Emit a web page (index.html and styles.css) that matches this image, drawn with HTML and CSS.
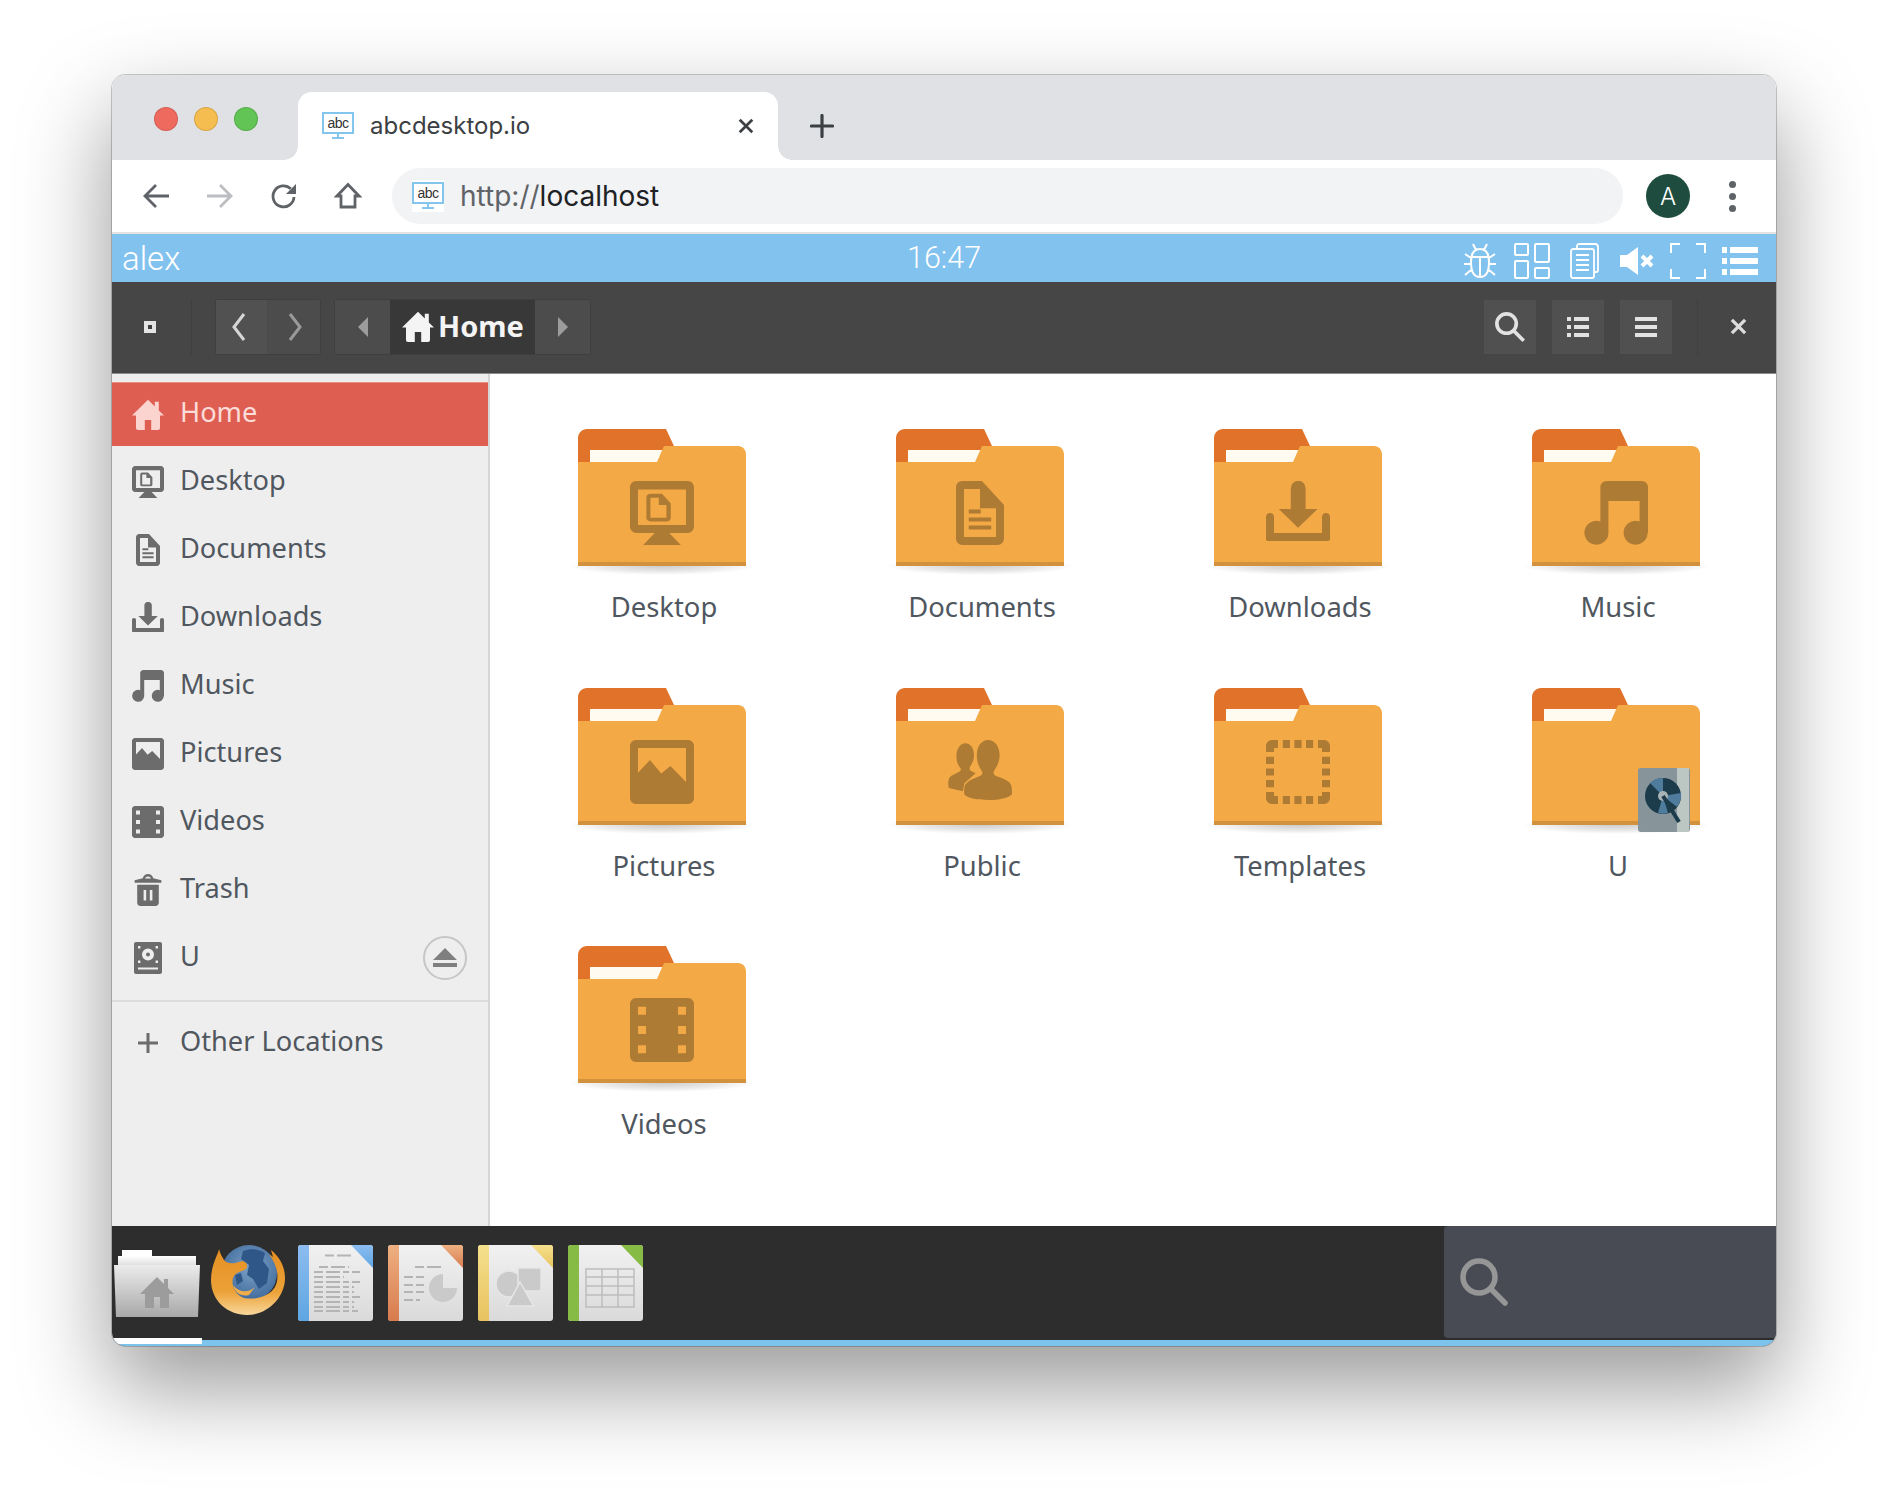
FILE: index.html
```html
<!DOCTYPE html>
<html lang="en">
<head>
<meta charset="utf-8">
<title>abcdesktop.io</title>
<link rel="stylesheet" href="styles.css">
</head>
<body>
<svg class="defs" width="0" height="0" aria-hidden="true">
  <defs>
    <radialGradient id="folderShadow" cx="50%" cy="50%" r="50%">
      <stop offset="0" stop-color="#000" stop-opacity=".2"/>
      <stop offset=".6" stop-color="#000" stop-opacity=".09"/>
      <stop offset="1" stop-color="#000" stop-opacity="0"/>
    </radialGradient>
    <linearGradient id="dockFolder" x1="0" y1="0" x2="0" y2="1"><stop offset="0" stop-color="#ececec"/><stop offset="1" stop-color="#a8a8a8"/></linearGradient>
    <linearGradient id="dockPaper" x1="0" y1="0" x2="0" y2="1"><stop offset="0" stop-color="#fff"/><stop offset="1" stop-color="#d6d6d6"/></linearGradient>
    <linearGradient id="loPage" x1="0" y1="0" x2="0" y2="1"><stop offset="0" stop-color="#f1f1f1"/><stop offset="1" stop-color="#dadada"/></linearGradient>
    <linearGradient id="foxBody" x1="0" y1="0" x2="0" y2="1"><stop offset="0" stop-color="#e58f22"/><stop offset=".65" stop-color="#eca238"/><stop offset="1" stop-color="#f8d79b"/></linearGradient>
    <radialGradient id="globe" cx="55%" cy="40%" r="60%"><stop offset="0" stop-color="#7fa3c8"/><stop offset="1" stop-color="#3f6a9b"/></radialGradient>
    <linearGradient id="loBlue" x1="0" y1="0" x2="0" y2="1"><stop offset="0" stop-color="#8cbcf0"/><stop offset="1" stop-color="#5ea6e2"/></linearGradient>
    <linearGradient id="loOrange" x1="0" y1="0" x2="0" y2="1"><stop offset="0" stop-color="#eeb081"/><stop offset="1" stop-color="#d87b4e"/></linearGradient>
    <linearGradient id="loYellow" x1="0" y1="0" x2="0" y2="1"><stop offset="0" stop-color="#f5e08c"/><stop offset="1" stop-color="#e8c25f"/></linearGradient>

    <symbol id="g-home" viewBox="0 0 16 16"><path d="M8 .4 0 8.3h2v6.2c0 .6.4 1 1 1h3.4v-5h3.2v5H13c.6 0 1-.4 1-1V8.3h2l-2.6-2.6V1.4h-2v2.3z"/></symbol>
    <symbol id="g-desktop" viewBox="0 0 16 16"><path fill-rule="evenodd" d="M1.6 0h12.8C15.3 0 16 .7 16 1.6v9.8c0 .9-.7 1.6-1.6 1.6H1.6C.7 13 0 12.3 0 11.4V1.6C0 .7.7 0 1.6 0zM2 2.1V11h12V2.1zM5.1 3.2h2.9l2.2 2.4v3.6c0 .5-.4.9-.9.9H5.1c-.6 0-1-.4-1-.9V4.200c0-.6.4-1 1-1zm0 1v5h4V6H7.200V4.200z"/><path d="M6.200 13h3.600l2.900 3H3.300z"/></symbol>
    <symbol id="g-doc" viewBox="0 0 16 16"><path fill-rule="evenodd" d="M3.600 0h4.900L14 6v8.400c0 .9-.7 1.600-1.600 1.600H3.600C2.700 16 2 15.300 2 14.400V1.600C2 .7 2.700 0 3.600 0zM4 2v12h8V6.800H8V2z"/><path d="M5.200 7.100h3v1h-3zM5.200 9.100h5.600v1H5.200zM5.200 11.100h5.600v1H5.200z"/></symbol>
    <symbol id="g-download" viewBox="0 0 16 16"><path d="M6.200 1.800a1.800 1.800 0 0 1 3.700 0V7h3L8 11.700 3.200 7h3z"/><path d="M1 8c.6 0 1 .4 1 1v4h12V9c0-.6.4-1 1-1s1 .4 1 1v5.500c0 .3-.2.500-.5.500H.5c-.3 0-.5-.2-.5-.5V9c0-.6.4-1 1-1z"/></symbol>
    <symbol id="g-music" viewBox="0 0 16 16"><path d="M5.700 0h8.800c.8 0 1.500.7 1.500 1.500V13h-.1a3 3 0 1 1-2-2.900V5H6.100v8a3 3 0 1 1-2-2.900V1.500C4.100.7 4.800 0 5.700 0z"/></symbol>
    <symbol id="g-pictures" viewBox="0 0 16 16"><path fill-rule="evenodd" d="M1.500 0h13c.8 0 1.500.7 1.500 1.500v13c0 .8-.7 1.500-1.500 1.500h-13C.7 16 0 15.300 0 14.500v-13C0 .7.7 0 1.500 0zM2 2v6.200l3-3.200 2.800 3.400 2.300-1.900L14 10.500V2z"/></symbol>
    <symbol id="g-videos" viewBox="0 0 16 16"><path fill-rule="evenodd" d="M1.500 0h13c.8 0 1.500.7 1.500 1.500v13c0 .8-.7 1.500-1.500 1.500h-13C.7 16 0 15.300 0 14.500v-13C0 .7.7 0 1.500 0zM2 2.200v2h2v-2zM12 2.200v2h2v-2zM2 7v2h2V7zM12 7v2h2V7zM2 11.800v2h2v-2zM12 11.800v2h2v-2z"/></symbol>
    <symbol id="g-trash" viewBox="0 0 16 16"><path d="M5.400 2.100C5.600 1 6.700 0 8 0s2.400 1 2.600 2.100l4.100 1v1.300H1.300V3.100zM6.500 2.200h3C9.300 1.600 8.700 1.200 8 1.200s-1.300.4-1.500 1z"/><path fill-rule="evenodd" d="M2.600 5.400h10.800v9c0 .9-.7 1.600-1.600 1.600H4.200c-.9 0-1.600-.7-1.600-1.600zM5.800 8v5.200h1.300V8zm3.100 0v5.200h1.300V8z"/></symbol>
    <symbol id="g-drive" viewBox="0 0 16 16"><path fill-rule="evenodd" d="M2 0h12c.6 0 1 .4 1 1v14c0 .6-.4 1-1 1H2c-.6 0-1-.4-1-1V1c0-.6.4-1 1-1zm6 3.200a3 3 0 1 0 0 6 3 3 0 0 0 0-6zm0 2a1 1 0 1 1 0 2 1 1 0 0 1 0-2zM3 2v1.200h1.200V2zm8.800 0v1.200H13V2zM3 9.300v1.200h1.200V9.300zm8.800 0v1.200H13V9.300zM3 12.800v1h10v-1z"/></symbol>
    <symbol id="g-public" viewBox="0 0 16 16"><path d="M10 0c1.700 0 2.900 1.600 2.900 3.800 0 1.600-.7 3-1.400 3.900-.2.500-.1 1 .3 1.200 1.300.6 3.500 1.100 4 2.400.2.800.200 1.500.2 2.200-.8 1-3.200 1.500-5.900 1.500-2.800 0-5-.4-6-1.300-.1-.8-.1-1.600.1-2.300.6-1.300 2.700-1.800 4-2.500.4-.2.500-.7.300-1.100-.7-.9-1.300-2.300-1.300-3.900C7.200 1.600 8.400 0 10 0z"/><path d="M4.300.8c1.300 0 2.200 1.200 2.200 3 0 1.200-.5 2.200-1 2.900-.2.400-.1.800.2 1l1.200.6-2.800 2.500-.4 2-3.500-.8c-.2-.8-.2-1.500 0-2.200.4-1 1.700-1.300 2.700-1.900.3-.2.400-.5.200-.9-.6-.7-1-1.700-1-2.900 0-1.800.900-3.300 2.200-3.300z"/></symbol>
    <symbol id="g-templates" viewBox="0 0 16 16"><path d="M1.500 0H3v2H2v1H0V1.500C0 .7.700 0 1.500 0zM13 0h1.500c.8 0 1.500.7 1.500 1.500V3h-2V2h-1zM0 13h2v1h1v2H1.500C.7 16 0 15.300 0 14.500zM14 13h2v1.500c0 .8-.7 1.500-1.500 1.500H13v-2h1zM4.200 0H6v2H4.200zM7.100 0h1.800v2H7.100zM10 0h1.800v2H10zM4.200 14H6v2H4.200zM7.100 14h1.800v2H7.100zM10 14h1.800v2H10zM0 4.200h2V6H0zM0 7.100h2v1.800H0zM0 10h2v1.800H0zM14 4.200h2V6h-2zM14 7.100h2v1.800h-2zM14 10h2v1.800h-2z"/></symbol>

    <symbol id="folder" viewBox="0 0 168 146" overflow="visible">
      <ellipse cx="84" cy="137" rx="94" ry="9" fill="url(#folderShadow)"/>
      <path fill="#e0722a" d="M0 36V9C0 4 4 0 9 0h79l8 17v19z"/>
      <rect x="12" y="21" width="78" height="15" fill="#fffbf0"/>
      <path fill="#f4a947" d="M0 33h79l7-16h74c4.400 0 8 3.600 8 8v108H0z"/>
      <rect y="133" width="168" height="4" fill="#d2913d"/>
    </symbol>

    <symbol id="abc" viewBox="0 0 32 28">
      <rect x="1" y="1" width="30" height="20" fill="#fff" stroke="#84c5ee" stroke-width="2"/>
      <path d="M15 21h2v4h-2zM10 25h12v2H10z" fill="#84c5ee"/>
      <text x="16" y="16" class="abc-text" text-anchor="middle">abc</text>
    </symbol>
  </defs>
</svg>

<div class="window">
  <header class="tabstrip">
    <div class="lights">
      <span class="light light-red"></span>
      <span class="light light-yellow"></span>
      <span class="light light-green"></span>
    </div>
    <div class="tab">
      <svg class="tab-fav"><use href="#abc"/></svg>
      <span class="tab-title">abcdesktop.io</span>
      <svg class="tab-close" viewBox="0 0 14 14"><path d="M1.500 1.500l11 11M12.500 1.500l-11 11"/></svg>
    </div>
    <svg class="tab-new" viewBox="0 0 24 24"><path d="M12 1.500v21M1.500 12h21"/></svg>
  </header>

  <div class="toolbar">
    <svg class="tb-btn" viewBox="0 0 28 28"><path d="M27 14H3M14 3 3 14l11 11"/></svg>
    <svg class="tb-btn tb-off" viewBox="0 0 28 28"><path d="M1 14h24M14 3l11 11-11 11"/></svg>
    <svg class="tb-btn" viewBox="0 0 28 28"><path d="M24 15a10.500 10.500 0 1 1-3.200-8.200"/><path class="tb-fill" d="M26 2v10H16z"/></svg>
    <svg class="tb-btn" viewBox="0 0 28 28"><path d="M14 2.500 3 14h4v11h14V14h4z"/></svg>
    <div class="address">
      <span class="addr-fav"><svg class="addr-fav-icon"><use href="#abc"/></svg></span>
      <span class="url"><span class="url-scheme">http://</span>localhost</span>
    </div>
    <span class="avatar">A</span>
    <span class="kebab"><i></i><i></i><i></i></span>
  </div>

  <div class="topbar">
    <span class="user">alex</span>
    <span class="clock">16:47</span>
    <div class="tray">
      <svg class="tray-i tray-bug" viewBox="0 0 32 36"><path d="M16 6c-6 0-9 5-9 13 0 9 3 15 9 15s9-6 9-15c0-8-3-13-9-13zM7 14h18M16 14v20M9 1l3 6M23 1l-3 6M1 11l6 4M31 11l-6 4M0 21h7M32 21h-7M1 32l6-5M31 32l-6-5"/></svg>
      <svg class="tray-i tray-grid" viewBox="0 0 36 36"><rect x="1" y="1" width="13" height="11" rx="1"/><rect x="21" y="1" width="14" height="18" rx="1"/><rect x="1" y="18" width="13" height="17" rx="1"/><rect x="21" y="25" width="14" height="10" rx="1"/></svg>
      <svg class="tray-i tray-doc" viewBox="0 0 29 36"><path d="M7 5V3c0-1 1-2 2-2h16c1.500 0 3 1 3 3v23c0 1-1 2-2 2h-2"/><path d="M3 6h19c1 0 2 1 2 2v25c0 1-1 2-2 2H3c-1 0-2-1-2-2V8c0-1 1-2 2-2zM6 12h13M6 17h13M6 22h13M6 27h13"/></svg>
      <svg class="tray-i tray-mute" viewBox="0 0 34 28"><path class="tray-fill" d="M0 8h7l11-8v28L7 20H0z"/><path class="tray-x" d="M22 9l10 10M32 9 22 19"/></svg>
      <svg class="tray-i tray-full" viewBox="0 0 36 36"><path d="M10 1H1v9M26 1h9v9M10 35H1v-9M26 35h9v-9"/></svg>
      <svg class="tray-i tray-list" viewBox="0 0 36 28"><path class="tray-fill" d="M0 0h5v6H0zM8 0h28v6H8zM0 11h5v6H0zM8 11h28v6H8zM0 22h5v6H0zM8 22h28v6H8z"/></svg>
    </div>
  </div>

  <div class="fm-header">
    <span class="fm-mini"></span>
    <span class="fm-sep"></span>
    <div class="fm-group">
      <span class="fm-seg fm-seg-back"><svg class="fm-chev" viewBox="0 0 14 28"><path d="M12 1 2 14l10 13"/></svg></span>
      <span class="fm-seg fm-seg-fwd"><svg class="fm-chev fm-chev-dim" viewBox="0 0 14 28"><path d="m2 1 10 13L2 27"/></svg></span>
    </div>
    <div class="fm-group fm-path">
      <span class="fm-seg fm-seg-arrow"><svg class="fm-tri" viewBox="0 0 10 20"><path d="M10 0v20L0 10z"/></svg></span>
      <span class="fm-seg fm-seg-crumb"><svg class="fm-house"><use href="#g-home"/></svg><b>Home</b></span>
      <span class="fm-seg fm-seg-arrow"><svg class="fm-tri" viewBox="0 0 10 20"><path d="M0 0v20l10-10z"/></svg></span>
    </div>
    <div class="fm-actions">
      <span class="fm-btn"><svg class="fm-ic" viewBox="0 0 28 28"><circle cx="11" cy="11" r="8.500"/><path d="m17 17 9 9"/></svg></span>
      <span class="fm-btn"><svg class="fm-ic fm-ic-solid" viewBox="0 0 22 22"><path d="M0 1h4v4H0zM7 1h15v4H7zM0 9h4v4H0zM7 9h15v4H7zM0 17h4v4H0zM7 17h15v4H7z"/></svg></span>
      <span class="fm-btn"><svg class="fm-ic fm-ic-solid" viewBox="0 0 22 22"><path d="M0 1h22v4H0zM0 9h22v4H0zM0 17h22v4H0z"/></svg></span>
      <span class="fm-sep fm-sep-right"></span>
      <svg class="fm-close" viewBox="0 0 18 18"><path d="m2 2 14 14M16 2 2 16"/></svg>
    </div>
  </div>

  <div class="fm-body">
    <nav class="sidebar">
      <a class="side-row side-active"><svg class="side-ic"><use href="#g-home"/></svg><span>Home</span></a>
      <a class="side-row"><svg class="side-ic"><use href="#g-desktop"/></svg><span>Desktop</span></a>
      <a class="side-row"><svg class="side-ic"><use href="#g-doc"/></svg><span>Documents</span></a>
      <a class="side-row"><svg class="side-ic"><use href="#g-download"/></svg><span>Downloads</span></a>
      <a class="side-row"><svg class="side-ic"><use href="#g-music"/></svg><span>Music</span></a>
      <a class="side-row"><svg class="side-ic"><use href="#g-pictures"/></svg><span>Pictures</span></a>
      <a class="side-row"><svg class="side-ic"><use href="#g-videos"/></svg><span>Videos</span></a>
      <a class="side-row"><svg class="side-ic"><use href="#g-trash"/></svg><span>Trash</span></a>
      <a class="side-row side-u"><svg class="side-ic"><use href="#g-drive"/></svg><span>U</span>
        <span class="eject"><svg class="eject-ic" viewBox="0 0 24 20"><path d="M12 0 24 12H0zM0 15h24v4H0z"/></svg></span>
      </a>
      <div class="side-div"></div>
      <a class="side-row"><svg class="side-ic side-plus" viewBox="0 0 20 20"><path d="M8.500 0h3v8.500H20v3h-8.500V20h-3v-8.500H0v-3h8.500z"/></svg><span>Other Locations</span></a>
    </nav>
    <main class="grid">
      <figure class="item"><div class="folder"><svg class="folder-svg"><use href="#folder"/></svg><svg class="folder-g"><use href="#g-desktop"/></svg></div><figcaption>Desktop</figcaption></figure>
      <figure class="item"><div class="folder"><svg class="folder-svg"><use href="#folder"/></svg><svg class="folder-g"><use href="#g-doc"/></svg></div><figcaption>Documents</figcaption></figure>
      <figure class="item"><div class="folder"><svg class="folder-svg"><use href="#folder"/></svg><svg class="folder-g"><use href="#g-download"/></svg></div><figcaption>Downloads</figcaption></figure>
      <figure class="item"><div class="folder"><svg class="folder-svg"><use href="#folder"/></svg><svg class="folder-g"><use href="#g-music"/></svg></div><figcaption>Music</figcaption></figure>
      <figure class="item"><div class="folder"><svg class="folder-svg"><use href="#folder"/></svg><svg class="folder-g"><use href="#g-pictures"/></svg></div><figcaption>Pictures</figcaption></figure>
      <figure class="item"><div class="folder"><svg class="folder-svg"><use href="#folder"/></svg><svg class="folder-g"><use href="#g-public"/></svg></div><figcaption>Public</figcaption></figure>
      <figure class="item"><div class="folder"><svg class="folder-svg"><use href="#folder"/></svg><svg class="folder-g"><use href="#g-templates"/></svg></div><figcaption>Templates</figcaption></figure>
      <figure class="item"><div class="folder"><svg class="folder-svg"><use href="#folder"/></svg>
        <svg class="folder-badge" viewBox="0 0 52 64">
          <rect width="52" height="64" rx="3" fill="#87959b"/>
          <rect x="39" width="12" height="64" fill="#bcc6c3"/>
          <circle cx="25" cy="28" r="18" fill="#1c3b4b"/>
          <path d="M25 28 12 15a18 18 0 0 1 13-5zM25 28l18-3a18 18 0 0 1-4 14zM25 28 20 45a18 18 0 0 0 10 0z" fill="#4f7c9c"/>
          <circle cx="25" cy="28" r="5" fill="#a9b4b6"/>
          <path d="m25 28 16 26" stroke="#1c3b4b" stroke-width="4"/>
        </svg>
      </div><figcaption>U</figcaption></figure>
      <figure class="item"><div class="folder"><svg class="folder-svg"><use href="#folder"/></svg><svg class="folder-g"><use href="#g-videos"/></svg></div><figcaption>Videos</figcaption></figure>
    </main>
  </div>

  <footer class="dock">
    <div class="dock-apps">
      <svg class="app app-folder" viewBox="0 0 86 67">
        <path d="M8 0h30v6H8z" fill="#fff"/>
        <path d="M4 6h78v12H4z" fill="url(#dockPaper)"/>
        <path d="M0 15h86l-2 52H2z" fill="url(#dockFolder)"/>
        <path d="M43 27 26 44h5v14h9V47h6v11h9V44h5l-6-6v-9h-4v5z" fill="#9c9c9c"/>
      </svg>
      <svg class="app app-fox" viewBox="0 0 74 70">
        <circle cx="38" cy="28" r="28" fill="url(#globe)"/>
        <path d="M32 6c8-3 16-2 22 2l-2 8 6 8-2 14-8 6-6-10-6-4 2-10-8-6zM24 30l6-2 2 8-6 4z" fill="#2f5788"/>
        <path fill="url(#foxBody)" d="M8 4C7 10 0 20 0 35c0 21 17 35 36 35 21 0 38-18 38-37 0-11-5-21-14-28l2 7-4-3c8 11 11 23 6 33-6 10-20 13-31 11-9-3-13-13-11-20 4-9 12-5 14-11 1-4-4-7-8-5-6 2-12 2-15-2-2-3-4-7-5-11z"/>
        <path fill="#f0ad4a" d="M22 40c6 8 16 8 22 2l-6 8c-8 2-14-2-16-10z"/>
      </svg>
      <svg class="app app-lo" viewBox="0 0 75 76">
        <rect width="75" height="76" rx="3" fill="url(#loPage)"/>
        <path d="M3 0h8v76H3a3 3 0 0 1-3-3V3a3 3 0 0 1 3-3z" fill="url(#loBlue)"/>
        <path d="M53 0h19a3 3 0 0 1 3 3v20z" fill="url(#loBlue)"/>
        <path class="lo-lines" d="M27 10.500h26M21 22h30M16 27h46M16 32h30M16 37h46M16 42h40M16 47h40M16 52h46M16 57h40M16 62h40M16 66h44"/>
      </svg>
      <svg class="app app-lo" viewBox="0 0 75 76">
        <rect width="75" height="76" rx="3" fill="url(#loPage)"/>
        <path d="M3 0h8v76H3a3 3 0 0 1-3-3V3a3 3 0 0 1 3-3z" fill="url(#loOrange)"/>
        <path d="M53 0h19a3 3 0 0 1 3 3v20z" fill="url(#loOrange)"/>
        <path class="lo-lines" d="M27 22h26M16 32h20M16 40h20M16 47h20M16 55h16"/>
        <path class="lo-shape" d="M55 43V29a14 14 0 1 0 14 14z"/>
      </svg>
      <svg class="app app-lo" viewBox="0 0 75 76">
        <rect width="75" height="76" rx="3" fill="url(#loPage)"/>
        <path d="M3 0h8v76H3a3 3 0 0 1-3-3V3a3 3 0 0 1 3-3z" fill="url(#loYellow)"/>
        <path d="M53 0h19a3 3 0 0 1 3 3v20z" fill="url(#loYellow)"/>
        <circle class="lo-shape lo-edge" cx="31" cy="39" r="13"/>
        <rect class="lo-shape lo-edge" x="40" y="23" width="23" height="23"/>
        <path class="lo-shape lo-edge" d="M42 37 55.500 61H29z"/>
      </svg>
      <svg class="app app-lo" viewBox="0 0 75 76">
        <rect width="75" height="76" rx="3" fill="url(#loPage)"/>
        <path d="M3 0h8v76H3a3 3 0 0 1-3-3V3a3 3 0 0 1 3-3z" fill="#86bb46"/>
        <path d="M53 0h19a3 3 0 0 1 3 3v20z" fill="#86bb46"/>
        <path class="lo-table" d="M18 24h48v38H18zM34 24v38M50 24v38M18 32h48M18 41h48M18 50h48"/>
      </svg>
    </div>
    <div class="dock-search">
      <svg class="dock-search-ic" viewBox="0 0 48 48"><circle cx="19" cy="19" r="16"/><path d="m31 31 14 14"/></svg>
    </div>
    <span class="dock-active"></span>
  </footer>
</div>
</body>
</html>
```

FILE: styles.css
```css
* { box-sizing: border-box; }
html, body { margin: 0; padding: 0; background: #fff; }
body { width: 1888px; height: 1494px; overflow: hidden; padding: 75px 112px 0; font-family: "Noto Sans", "Open Sans", sans-serif; }
.defs { position: absolute; }
.abc-text { font-family: "Liberation Sans", sans-serif; font-size: 14px; letter-spacing: -.6px; fill: #333; }

.window { position: relative; width: 1664px; height: 1271px; border-radius: 14px; overflow: hidden; display: flex; flex-direction: column; background: #fff; }
body::before { content: ""; position: absolute; left: 112px; top: 75px; width: 1664px; height: 1271px; border-radius: 14px; box-shadow: 0 0 0 1px rgba(0,0,0,.2), 0 40px 90px 2px rgba(0,0,0,.4); }

/* tab strip */
.tabstrip { height: 85px; flex: none; background: #dfe1e5; display: flex; align-items: flex-end; padding-left: 42px; position: relative; }
.lights { display: flex; gap: 16px; align-self: flex-start; margin-top: 32px; margin-right: 40px; }
.light { width: 24px; height: 24px; border-radius: 50%; border: 1px solid rgba(0,0,0,.12); }
.light-red { background: #ee6a5f; }
.light-yellow { background: #f5bd4f; }
.light-green { background: #61c454; }
.tab { position: relative; width: 480px; height: 68px; background: #fff; border-radius: 14px 14px 0 0; display: flex; align-items: center; padding-left: 24px; margin-left: 0; }
.tab::before, .tab::after { content: ""; position: absolute; bottom: 0; width: 14px; height: 14px; }
.tab::before { left: -14px; background: radial-gradient(circle at 0 0, transparent 13.500px, #fff 14px); }
.tab::after { right: -14px; background: radial-gradient(circle at 100% 0, transparent 13.500px, #fff 14px); }
.tab-fav { width: 32px; height: 28px; flex: none; margin-right: 16px; margin-top: -1px; }
.tab-title { font-family: Inter, "Liberation Sans", sans-serif; font-size: 24px; color: #3c4043; margin-top: -2px; }
.tab-close { position: absolute; left: 440px; top: 26px; width: 16px; height: 16px; fill: none; stroke: #3c4043; stroke-width: 2.400; }
.tab-new { width: 24px; height: 24px; fill: none; stroke: #3c4043; stroke-width: 3.200; stroke-linecap: round; margin-left: 32px; margin-bottom: 22px; }

/* browser toolbar */
.toolbar { height: 72px; flex: none; background: #fff; display: flex; align-items: center; padding-left: 30px; border-bottom: 0; }
.tb-btn { width: 28px; height: 28px; flex: none; margin-right: 36px; fill: none; stroke: #5f6368; stroke-width: 2.800; }
.tb-off { stroke: #bbbdc0; }
.tb-fill { fill: #5f6368; stroke: none; }
.address { width: 1231px; height: 56px; margin-left: -6px; background: #f1f3f4; border-radius: 28px; display: flex; align-items: center; padding-left: 20px; }
.addr-fav { width: 32px; height: 32px; background: #fff; display: flex; align-items: center; justify-content: center; flex: none; }
.addr-fav-icon { width: 32px; height: 28px; }
.url { font-family: Inter, "Liberation Sans", sans-serif; font-size: 28px; margin-left: 16px; color: #202124; }
.url-scheme { color: #5f6368; }
.avatar { width: 44px; height: 44px; border-radius: 50%; background: #1e4d3f; color: #fff; margin-left: 23px; display: flex; align-items: center; justify-content: center; font-family: Inter, sans-serif; font-size: 24px; font-weight: 300; flex: none; }
.kebab { display: flex; flex-direction: column; gap: 5px; margin-left: 39px; width: 7px; }
.kebab i { width: 7px; height: 7px; border-radius: 50%; background: #5f6368; display: block; }

/* blue bar */
.topbar { height: 50px; flex: none; background: #82c2ee; border-top: 2px solid #e3e3e3; display: flex; align-items: center; color: #fff; position: relative; padding-left: 10px; }
.user { font-family: Roboto, sans-serif; font-weight: 300; font-size: 33px; line-height: 44px; margin-top: 1px; }
.clock { position: absolute; left: 795px; top: 4px; font-family: Roboto, sans-serif; font-weight: 300; font-size: 30.500px; line-height: 40px; }
.tray { margin-left: auto; display: flex; align-items: center; height: 100%; padding-right: 18px; padding-top: 6px; }
.tray-i { fill: none; stroke: #fff; stroke-width: 2; flex: none; }
.tray-bug { width: 32px; height: 36px; margin-right: 18px; }
.tray-grid { width: 36px; height: 36px; margin-right: 20px; }
.tray-doc { width: 29px; height: 36px; margin-right: 21px; stroke-width: 1.800; }
.tray-mute { width: 34px; height: 28px; margin-right: 16px; }
.tray-full { width: 36px; height: 36px; margin-right: 16px; }
.tray-list { width: 36px; height: 28px; }
.tray-fill { fill: #fff; stroke: none; }
.tray-x { stroke-width: 4; }

/* file manager header */
.fm-header { height: 92px; flex: none; background: #464646; border-bottom: 1px solid #8b8b8b; display: flex; align-items: center; padding: 0 0 2px 32px; }
.fm-mini { width: 12px; height: 12px; background: #3f3f3f; border: 4px solid #e4e4e4; flex: none; margin-right: 35px; }
.fm-sep { width: 1px; height: 56px; background: #404040; flex: none; margin-right: 24px; }
.fm-group { display: flex; height: 54px; box-shadow: 0 0 0 1px #3f3f3f; border-radius: 2px; margin-right: 15px; }
.fm-seg { display: flex; align-items: center; justify-content: center; background: #4c4c4c; }
.fm-seg-back { width: 51px; background: #515151; padding-right: 6px; }
.fm-seg-fwd { width: 53px; padding-left: 3px; }
.fm-seg-arrow { width: 55px; }
.fm-seg-crumb { width: 145px; background: #383838; gap: 4px; color: #f4f4f4; font-size: 29px; justify-content: flex-start; padding-left: 12px; }
.fm-seg-crumb b { font-weight: 700; line-height: 1; margin-top: -2px; }
.fm-chev { width: 14px; height: 28px; fill: none; stroke: #d6d6d6; stroke-width: 3; }
.fm-chev-dim { stroke: #9a9a9a; }
.fm-tri { width: 10px; height: 20px; fill: #9c9c9c; }
.fm-house { width: 32px; height: 32px; fill: #f4f4f4; }
.fm-actions { margin-left: auto; display: flex; align-items: center; gap: 16px; padding-right: 29px; }
.fm-btn { width: 52px; height: 54px; background: #505050; display: flex; align-items: center; justify-content: center; }
.fm-ic { width: 32px; height: 32px; fill: none; stroke: #e2e2e2; stroke-width: 3.200; }
.fm-ic-solid { width: 22px; height: 22px; fill: #e2e2e2; stroke: none; }
.fm-sep-right { margin: 0 24px 0 9px; }
.fm-close { width: 17px; height: 17px; fill: none; stroke: #dcdcdc; stroke-width: 3.500; margin-left: -8px; }

/* body */
.fm-body { flex: 1; display: flex; min-height: 0; }
.sidebar { width: 378px; flex: none; background: #eee; border-right: 2px solid #d6d6d6; padding-top: 8px; color: #50575f; font-size: 27.200px; }
.side-row { height: 64px; margin-bottom: 4px; display: flex; align-items: center; padding-left: 20px; gap: 16px; position: relative; }
.side-row span { line-height: 36px; margin-top: -5px; }
.side-active { background: #df5e52; color: #fbdcd9; border-top: 1px solid rgba(255,255,255,.3); }
.side-ic { width: 32px; height: 32px; fill: #6c6c6c; flex: none; }
.side-active .side-ic { fill: #fbd3cf; }
.side-plus { padding: 6px; }
.side-div { height: 2px; background: #dcdcdc; margin: 10px 0 9px; }
.side-row .eject { position: absolute; left: 311px; top: 10px; width: 44px; height: 44px; border: 2px solid #c6c6c6; border-radius: 50%; display: flex; align-items: center; justify-content: center; margin: 0; }
.eject-ic { width: 24px; height: 20px; fill: #7f7f7f; }

.grid { flex: 1; display: grid; grid-template-columns: repeat(4, 318px); grid-auto-rows: 258.500px; padding: 55px 0 0 13px; align-content: start; }
.item { margin: 0; display: flex; flex-direction: column; align-items: center; color: #50575f; font-size: 27.400px; }
.item figcaption { margin-top: 23px; margin-left: 4px; line-height: 36px; }
.folder { position: relative; width: 168px; height: 137px; }
.folder-svg { width: 168px; height: 146px; display: block; overflow: visible; }
.folder-g { position: absolute; left: 52px; top: 52px; width: 64px; height: 64px; fill: #ad7b33; }
.folder-badge { position: absolute; left: 106px; top: 80px; width: 52px; height: 64px; }

/* dock */
.dock { position: relative; height: 120px; flex: none; background: #2d2d2d; border-bottom: 6px solid #7cc3ee; display: flex; }
.dock-apps { display: flex; align-items: flex-start; padding: 19px 0 0 2px; }
.app { flex: none; }
.app-folder { width: 86px; height: 67px; margin: 5px 11px 0 0; }
.app-fox { width: 74px; height: 70px; margin-right: 13px; }
.app-lo { width: 75px; height: 76px; margin-right: 15px; }
.lo-lines { fill: none; stroke: #b4b4b4; stroke-width: 1.800; stroke-dasharray: 9 3 14 3 6 3; }
.lo-shape { fill: #cacaca; }
.lo-edge { stroke: #e6e6e6; stroke-width: 1.500; }
.lo-table { fill: none; stroke: #bdbdbd; stroke-width: 1.500; }
.dock-search { margin-left: auto; width: 332px; height: 112px; background: #494b54; border-radius: 4px 0 0 4px; display: flex; align-items: center; padding-left: 16px; }
.dock-search-ic { width: 48px; height: 48px; fill: none; stroke: #969696; stroke-width: 5.500; stroke-linecap: round; }
.dock-active { position: absolute; left: 0; bottom: -4px; width: 90px; height: 6px; background: #fff; }
```
